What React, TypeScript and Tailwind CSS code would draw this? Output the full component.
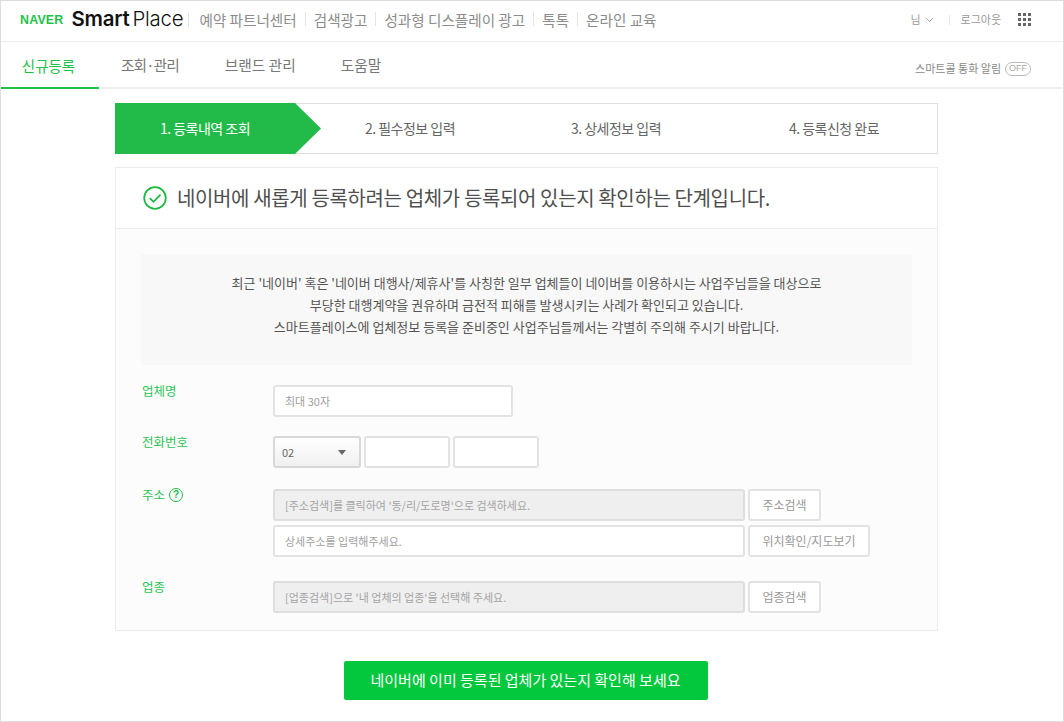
import React from "react";

const font = { fontFamily: '"Noto Sans CJK KR", "Liberation Sans", sans-serif' };
const fieldBox = "h-8 rounded-[3px] border-2 border-[#e3e3e3] bg-white flex items-center px-[10px] text-[11px] text-[#a0a0a0]";
const greyBox = "h-8 rounded-[3px] border-2 border-[#dedede] bg-[#efefef] flex items-center px-[10px] text-[11px] text-[#a4a4a4]";
const btn = "h-8 rounded-[3px] border-2 border-[#e3e3e3] bg-white flex items-center justify-center text-[12px] text-[#999]";

function Sep({ className = "mx-[8px]" }: { className?: string }) {
  return <span className={`w-px h-[14px] bg-[#e4e4e4] ${className}`} />;
}

function Step({ w, children, className = "" }: { w: string; children: React.ReactNode; className?: string }) {
  return <div className={`${w} shrink-0 flex items-center justify-center text-[14px] tracking-[-0.5px] text-[#666] ${className}`}>{children}</div>;
}

export default function App() {
  return (
    <div style={font} className="w-[1064px] h-[722px] overflow-hidden bg-white border border-[#dcdcdc] font-normal">
      {/* top bar */}
      <header className="h-[41px] flex items-center border-b border-[#ececec] pl-[19px] pr-[32px] pb-[3px]">
        <span style={{ fontFamily: '"Liberation Sans", sans-serif' }} className="text-[12.4px] font-bold text-[#1ec24a] tracking-[0.2px] mr-[8px] mt-[2px]">NAVER</span>
        <span style={{ fontFamily: 'Inter, sans-serif' }} className="text-[20.4px] text-[#111] tracking-[-0.2px] flex">
          <span className="font-semibold">Smart</span>
          <span className="font-light ml-[3px]">Place</span>
        </span>
        <Sep className="ml-[5px] mr-[10px]" />
        <nav className="flex items-center text-[14.6px] text-[#8c8c8c]">
          <span>예약 파트너센터</span>
          <Sep />
          <span>검색광고</span>
          <Sep />
          <span>성과형 디스플레이 광고</span>
          <Sep />
          <span>톡톡</span>
          <Sep />
          <span>온라인 교육</span>
        </nav>
        <div className="ml-auto flex items-center text-[11px] text-[#999]">
          <span>님</span>
          <svg className="ml-[4px]" width="9" height="6" viewBox="0 0 9 6" fill="none" stroke="#aaa"><path d="M1 1l3.5 3.5L8 1" /></svg>
          <span className="w-px h-[10px] bg-[#e4e4e4] ml-[15px] mr-[11px]" />
          <span>로그아웃</span>
          <div className="ml-[17px] grid grid-cols-3 gap-[2px]">
            {Array.from({ length: 9 }).map((_, i) => (
              <span key={i} className="w-[3px] h-[3px] bg-[#666]" />
            ))}
          </div>
        </div>
      </header>

      {/* tabs */}
      <div className="h-[47px] flex items-stretch border-b-2 border-[#eeeeee] pr-[32px]">
        <div className="w-[98px] -mb-[2px] border-b-2 border-[#1ec24a] flex items-center justify-center text-[14.5px] text-[#1ec24a] pt-[2px] pr-[3px]">신규등록</div>
        <div className="ml-[22px] flex items-center text-[14.7px] text-[#777] pt-[2px] tracking-[-0.9px]">조회·관리</div>
        <div className="ml-[46px] flex items-center text-[14.7px] text-[#777] pt-[2px]">브랜드 관리</div>
        <div className="ml-[45px] flex items-center text-[14.7px] text-[#777] pt-[2px]">도움말</div>
        <div className="ml-auto flex items-center text-[11px] text-[#888] pt-[8px]">
          <span>스마트콜 통화 알림</span>
          <span style={{ fontFamily: '"Liberation Sans", sans-serif' }} className="ml-[4px] w-[26px] h-[14px] rounded-full border border-[#bbb] flex items-center justify-center text-[9px] text-[#aaa]">OFF</span>
        </div>
      </div>

      {/* main column */}
      <main className="w-[823px] ml-[114px]">
        {/* steps */}
        <div className="mt-[14px] h-[51px] flex border border-l-0 border-[#e0e0e0]">
          <div className="w-[206px] shrink-0 -my-px h-[51px] bg-[#22bb4a] [clip-path:polygon(0_0,180px_0,100%_50%,180px_100%,0_100%)] flex items-center justify-center text-[14px] tracking-[-0.5px] text-white pr-[26px]">
            1. 등록내역 조회
          </div>
          <Step w="w-[180px]" className="-ml-[1px]">2. 필수정보 입력</Step>
          <Step w="w-[214px]" className="ml-[9px]">3. 상세정보 입력</Step>
          <Step w="w-[190px]" className="ml-[16px]">4. 등록신청 완료</Step>
        </div>

        {/* card */}
        <section className="mt-[13px] h-[464px] border border-[#ececec] bg-[#fcfcfc]">
          <div className="h-[61px] bg-white border-b border-[#ececec] flex items-center pl-[27px]">
            <svg width="24" height="24" viewBox="0 0 24 24" fill="none" stroke="#17b93f" strokeWidth="1.7">
              <circle cx="12" cy="12" r="10.8" />
              <path d="M6.8 12.2l3.7 3.6 7-7.2" />
            </svg>
            <h1 className="ml-[10px] text-[20px] font-normal text-[#4f4f4f] tracking-[-0.37px]">네이버에 새롭게 등록하려는 업체가 등록되어 있는지 확인하는 단계입니다.</h1>
          </div>

          <div className="px-[25px] pt-[25px]">
            <div className="h-[111px] bg-[#f8f8f8] flex flex-col items-center justify-center text-[13px] leading-[22px] text-[#555] pb-[10px]">
              <p>최근 '네이버' 혹은 '네이버 대행사/제휴사'를 사칭한 일부 업체들이 네이버를 이용하시는 사업주님들을 대상으로</p>
              <p>부당한 대행계약을 권유하며 금전적 피해를 발생시키는 사례가 확인되고 있습니다.</p>
              <p>스마트플레이스에 업체정보 등록을 준비중인 사업주님들께서는 각별히 주의해 주시기 바랍니다.</p>
            </div>

            <div className="mt-[20px] flex flex-col text-[12.5px] text-[#2ac455]">
              <div className="flex h-8">
                <label className="w-[131px] ml-[1px] -mt-[3px]">업체명</label>
                <div className={`${fieldBox} w-[240px]`}>최대 30자</div>
              </div>

              <div className="flex h-8 mt-[19px]">
                <label className="w-[131px] ml-[1px] -mt-[3px]">전화번호</label>
                <div className="w-[88px] h-8 rounded-[3px] border-2 border-[#d8d8d8] bg-gradient-to-b from-white to-[#f0f0f0] flex items-center justify-between pl-[7px] pr-[13px] text-[11px] text-[#666]">
                  <span>02</span>
                  <span className="w-0 h-0 border-x-[4px] border-x-transparent border-t-[5px] border-t-[#666]" />
                </div>
                <div className={`${fieldBox} w-[86px] ml-[3px]`} />
                <div className={`${fieldBox} w-[86px] ml-[3px]`} />
              </div>

              <div className="flex mt-[21px]">
                <label className="w-[131px] ml-[1px] flex items-start -mt-[3px] gap-[4px]">
                  주소
                  <span style={{ fontFamily: '"Liberation Sans", sans-serif' }} className="mt-[2px] w-[14px] h-[14px] rounded-full border border-[#22b84a] text-[#22b84a] text-[10px] font-bold leading-[12px] text-center">?</span>
                </label>
                <div className="flex flex-col gap-[4px]">
                  <div className="flex gap-[3px]">
                    <div className={`${greyBox} w-[472px]`}>[주소검색]를 클릭하여 '동/리/도로명'으로 검색하세요.</div>
                    <div className={`${btn} w-[73px]`}>주소검색</div>
                  </div>
                  <div className="flex gap-[3px]">
                    <div className={`${fieldBox} w-[472px]`}>상세주소를 입력해주세요.</div>
                    <div className={`${btn} w-[122px]`}>위치확인/지도보기</div>
                  </div>
                </div>
              </div>

              <div className="flex h-8 mt-[24px]">
                <label className="w-[131px] ml-[1px] -mt-[3px]">업종</label>
                <div className="flex gap-[3px]">
                  <div className={`${greyBox} w-[472px]`}>[업종검색]으로 '내 업체의 업종'을 선택해 주세요.</div>
                  <div className={`${btn} w-[73px]`}>업종검색</div>
                </div>
              </div>
            </div>
          </div>
        </section>

        <div className="mt-[30px] flex justify-center">
          <div className="w-[364px] h-[39px] -ml-[2px] rounded-[2px] bg-[#03c73c] flex items-center justify-center text-[15px] text-white">
            네이버에 이미 등록된 업체가 있는지 확인해 보세요
          </div>
        </div>
      </main>
    </div>
  );
}
